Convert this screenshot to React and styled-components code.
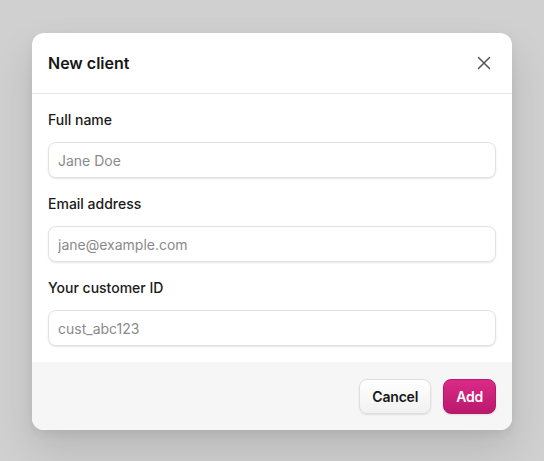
import React from 'react';
import styled, { createGlobalStyle } from 'styled-components';

const GlobalStyle = createGlobalStyle`
  html, body {
    margin: 0;
    padding: 0;
    background: #d0d0d0;
    font-family: Inter, "Noto Sans", sans-serif;
  }
`;

const Backdrop = styled.div`
  width: 544px;
  height: 461px;
  display: flex;
  justify-content: center;
  padding-top: 33px;
  box-sizing: border-box;
`;

const Dialog = styled.form`
  width: 480px;
  height: 397px;
  background: #fff;
  border-radius: 12px;
  overflow: hidden;
  display: flex;
  flex-direction: column;
  box-shadow: 0 20px 40px rgba(0, 0, 0, 0.12), 0 4px 10px rgba(0, 0, 0, 0.06);
`;

const Header = styled.div`
  height: 61px;
  box-sizing: border-box;
  display: flex;
  align-items: center;
  justify-content: space-between;
  padding: 0 16px;
  border-bottom: 1px solid #e6e6e6;
`;

const Title = styled.h2`
  margin: 0;
  font-size: 16px;
  font-weight: 600;
  color: #161616;
`;

const CloseButton = styled.button`
  width: 24px;
  height: 24px;
  padding: 0;
  border: none;
  background: none;
  display: flex;
  align-items: center;
  justify-content: center;
  color: #555;
  cursor: pointer;
`;

const Body = styled.div`
  flex: 1;
  padding: 16px 16px 0;
  display: flex;
  flex-direction: column;
  gap: 16px;
`;

const Field = styled.label`
  display: flex;
  flex-direction: column;
  gap: 12px;
`;

const LabelText = styled.span`
  font-size: 14px;
  line-height: 20px;
  font-weight: 500;
  color: #1a1a1a;
`;

const TextInput = styled.input`
  height: 36px;
  box-sizing: border-box;
  border: 1px solid #e2e2e2;
  border-radius: 8px;
  padding: 0 10px 0 9px;
  font-family: inherit;
  font-size: 14px;
  color: #1a1a1a;
  box-shadow: 0 1px 2px rgba(0, 0, 0, 0.1);
  outline: none;

  &::placeholder {
    color: #8a8a8a;
  }
`;

const Footer = styled.div`
  height: 68px;
  box-sizing: border-box;
  background: #f6f6f6;
  display: flex;
  align-items: center;
  justify-content: flex-end;
  gap: 12px;
  padding: 0 16px;
`;

const Button = styled.button`
  height: 35px;
  box-sizing: border-box;
  padding: 0 12px;
  border-radius: 8px;
  font-family: inherit;
  font-size: 14px;
  font-weight: 600;
  letter-spacing: -0.2px;
  cursor: pointer;
  border: 1px solid ${(p) => (p.$primary ? '#b51a6c' : '#dedede')};
  color: ${(p) => (p.$primary ? '#fff' : '#161616')};
  background: ${(p) =>
    p.$primary
      ? 'linear-gradient(180deg, #dc2a86 0%, #b8196c 100%)'
      : 'linear-gradient(180deg, #ffffff 0%, #f1f1f1 100%)'};
  box-shadow: 0 1px 2px rgba(0, 0, 0, 0.1);
`;

const fields = [
  { label: 'Full name', placeholder: 'Jane Doe', type: 'text' },
  { label: 'Email address', placeholder: 'jane@example.com', type: 'email' },
  { label: 'Your customer ID', placeholder: 'cust_abc123', type: 'text' },
];

const App = () => (
  <>
    <GlobalStyle />
    <Backdrop>
      <Dialog onSubmit={(e) => e.preventDefault()}>
        <Header>
          <Title>New client</Title>
          <CloseButton type='button' aria-label='Close'>
            <svg width='14' height='14' viewBox='0 0 14 14' fill='none'>
              <path d='M1.5 1.5l11 11M12.5 1.5l-11 11' stroke='currentColor' strokeWidth='1.5' strokeLinecap='round' />
            </svg>
          </CloseButton>
        </Header>
        <Body>
          {fields.map((f) => (
            <Field key={f.label}>
              <LabelText>{f.label}</LabelText>
              <TextInput type={f.type} placeholder={f.placeholder} />
            </Field>
          ))}
        </Body>
        <Footer>
          <Button type='button'>Cancel</Button>
          <Button type='submit' $primary>
            Add
          </Button>
        </Footer>
      </Dialog>
    </Backdrop>
  </>
);

export default App;
